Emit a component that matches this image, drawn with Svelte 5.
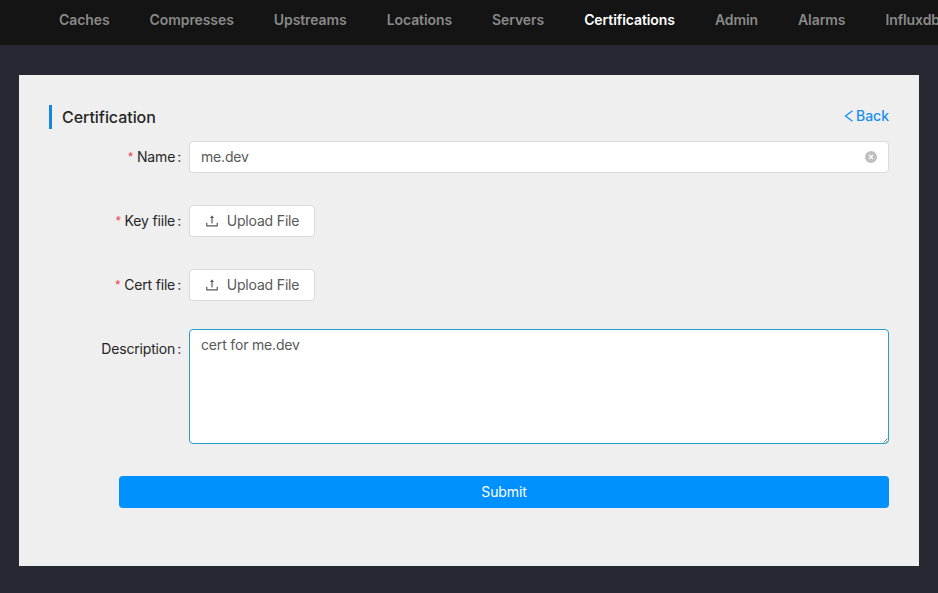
<script>
  const navItems = [
    'Caches', 'Compresses', 'Upstreams', 'Locations', 'Servers',
    'Certifications', 'Admin', 'Alarms', 'Influxdb'
  ];
  const active = 'Certifications';
  let name = $state('me.dev');
  let description = $state('cert for me.dev');
</script>

{#snippet upload()}
  <button type="button" class="upload">
    <svg viewBox="64 64 896 896" width="14" height="14" fill="currentColor" aria-hidden="true">
      <path d="M400 317.700h73.900V656c0 4.400 3.600 8 8 8h60c4.400 0 8-3.600 8-8V317.700H624c6.700 0 10.400-7.700 6.300-12.900L518.300 163a8 8 0 0 0-12.600 0l-112 141.700c-4.100 5.300-.4 13 6.300 13zM878 626h-60c-4.400 0-8 3.600-8 8v154H214V634c0-4.400-3.600-8-8-8h-60c-4.400 0-8 3.600-8 8v198c0 17.700 14.300 32 32 32h684c17.700 0 32-14.300 32-32V634c0-4.400-3.600-8-8-8z" />
    </svg>
    <span>Upload File</span>
  </button>
{/snippet}

<div class="page">
  <nav>
    {#each navItems as item}
      <a href="#{item}" class:active={item === active}>{item}</a>
    {/each}
  </nav>

  <main>
    <header>
      <h1>Certification</h1>
      <a class="back" href="#back">
        <svg viewBox="0 0 10 12" width="10" height="12" fill="none" stroke="currentColor" stroke-width="1.350" aria-hidden="true">
          <path d="M8.500 .7 1.500 6l7 5.300" />
        </svg>
        <span>Back</span>
      </a>
    </header>

    <form>
      <div class="row">
        <label class="required" for="name">Name</label>
        <div class="input">
          <input id="name" bind:value={name} />
          <svg viewBox="0 0 12 12" width="12" height="12" aria-hidden="true">
            <circle cx="6" cy="6" r="6" fill="#bfbfbf" />
            <path d="M4 3.900l4 4.200M8 3.900l-4 4.200" stroke="#fff" stroke-width="1.300" />
          </svg>
        </div>
      </div>
      <div class="row">
        <span class="label required">Key fiile</span>
        {@render upload()}
      </div>
      <div class="row">
        <span class="label required">Cert file</span>
        {@render upload()}
      </div>
      <div class="row description">
        <label for="description">Description</label>
        <div class="area">
          <textarea id="description" bind:value={description}></textarea>
          <svg class="grip" viewBox="0 0 5 5" width="5" height="5" stroke="#555" stroke-width=".8" aria-hidden="true">
            <path d="M.5 4.500l4-4M3 4.500l1.500-1.500" />
          </svg>
        </div>
      </div>
      <button type="button" class="submit">Submit</button>
    </form>
  </main>
</div>

<style>
  :global(body) {
    background: #272932;
  }
  .page {
    box-sizing: border-box;
    height: 593px;
    overflow: hidden;
    background: #272932;
    font: 14px/22px Inter, 'Liberation Sans', sans-serif;
    letter-spacing: -0.17px;
    color: #262626;
  }
  nav {
    box-sizing: border-box;
    display: flex;
    gap: 40px;
    height: 45px;
    padding: 9px 0 0 59px;
    overflow: hidden;
    background: #141414;
    font-weight: 600;
    letter-spacing: -0.085px;
    white-space: nowrap;
  }
  nav a {
    color: #898989;
    text-decoration: none;
  }
  nav a.active {
    color: #fff;
  }
  main {
    box-sizing: border-box;
    height: 491px;
    margin: 30px 19px 0;
    padding: 30px;
    background: #efefef;
  }
  header {
    display: flex;
    justify-content: space-between;
    height: 24px;
    margin-bottom: 12px;
  }
  h1 {
    margin: 0;
    padding-left: 10px;
    border-left: 3px solid #1488e0;
    font-size: 16px;
    font-weight: 500;
    line-height: 24px;
    letter-spacing: -0.05px;
  }
  .back {
    display: flex;
    align-items: center;
    gap: 2px;
    height: 22px;
    color: #1890f0;
    font-weight: 500;
    text-decoration: none;
    letter-spacing: 0;
  }
  .row {
    display: flex;
    height: 32px;
    margin-bottom: 32px;
  }
  .row.description {
    height: 115px;
    margin: -4px 0 32px;
  }
  label,
  .label {
    box-sizing: border-box;
    flex: 0 0 140px;
    padding-right: 8px;
    line-height: 32px;
    text-align: right;
    white-space: nowrap;
  }
  .description label {
    padding-top: 4px;
  }
  label::after,
  .label::after {
    content: ':';
    margin-left: 2px;
  }
  .required::before {
    content: '*';
    margin-right: 4px;
    color: #e8374a;
    font: 13px/1 'Liberation Sans', sans-serif;
    vertical-align: 1px;
  }
  .input {
    box-sizing: border-box;
    display: flex;
    flex: 1;
    align-items: center;
    padding: 0 11px;
    border: 1px solid #d9d9d9;
    border-radius: 4px;
    background: #fff;
  }
  input {
    flex: 1;
    min-width: 0;
    padding: 0;
    border: 0;
    outline: 0;
    background: none;
    font: inherit;
    letter-spacing: inherit;
    color: #595959;
  }
  .upload {
    box-sizing: border-box;
    display: flex;
    align-items: center;
    justify-content: center;
    gap: 8px;
    width: 126px;
    padding: 0;
    border: 1px solid #d9d9d9;
    border-radius: 4px;
    background: #fff;
    font: inherit;
    letter-spacing: inherit;
    color: #595959;
    white-space: nowrap;
  }
  .area {
    position: relative;
    display: flex;
    flex: 1;
  }
  textarea {
    box-sizing: border-box;
    flex: 1;
    height: 115px;
    margin: 0;
    padding: 4px 11px;
    border: 1px solid #259fc9;
    border-radius: 4px;
    outline: 0;
    background: #fff;
    font: inherit;
    letter-spacing: inherit;
    color: #595959;
    resize: none;
  }
  .grip {
    position: absolute;
    right: 1px;
    bottom: 1px;
  }
  .submit {
    display: block;
    width: 770px;
    height: 32px;
    margin-left: auto;
    padding: 0;
    border: 0;
    border-radius: 4px;
    background: #0091ff;
    font: inherit;
    letter-spacing: -0.1px;
    color: #fff;
  }
</style>
